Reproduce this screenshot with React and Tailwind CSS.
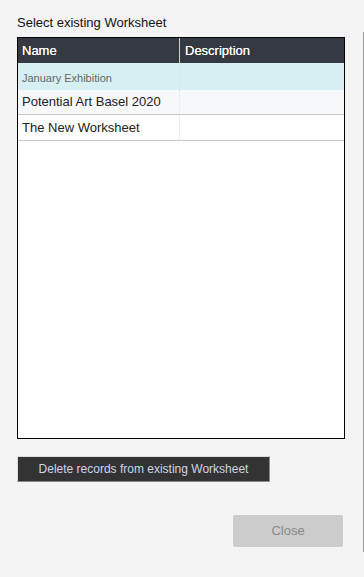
import React from 'react';

const rows = [
  { name: 'January Exhibition', selected: true },
  { name: 'Potential Art Basel 2020', alt: true },
  { name: 'The New Worksheet' },
];

const App = () => {
  return (
    <div className="relative w-[364px] h-[577px] bg-[#f4f4f4] overflow-hidden font-['Liberation_Sans',Arial,sans-serif]">
      {/* sliver of the window behind */}
      <div className="absolute right-0 top-[32px] w-px h-[520px] bg-[#9a9a9a]"></div>

      <div className="flex flex-col pl-[17px] pr-[19px] pt-[15px]">
        <p className="text-[13px] text-[#111] leading-[16px] mb-[6px]">Select existing Worksheet</p>

        <div className="h-[402px] border border-black bg-white">
          <div className="flex h-[25px] bg-[#353941] text-white text-[13px] [text-shadow:0_0_0.4px_#fff]">
            <div className="w-[162px] border-r border-[#d0d0d0] px-[4px] flex items-center">Name</div>
            <div className="flex-1 px-[5px] flex items-center">Description</div>
          </div>
          {rows.map((r) => (
            <div
              key={r.name}
              className={
                r.selected
                  ? 'flex h-[27px] bg-[#d6eff3]'
                  : r.alt
                  ? 'flex h-[25px] bg-[#f7f8fa] border-b border-[#c8c8c8]'
                  : 'flex h-[26px] bg-white border-b border-[#c8c8c8]'
              }
            >
              <div
                className={
                  r.selected
                    ? 'w-[162px] border-r border-dotted border-[#e2e2e2] px-[4px] pt-[4px] flex items-center text-[11px] text-[#666]'
                    : 'w-[162px] border-r border-dotted border-[#e2e2e2] px-[4px] flex items-center text-[13px] text-[#222]'
                }
              >
                {r.name}
              </div>
              <div className="flex-1"></div>
            </div>
          ))}
        </div>

        <button className="mt-[17px] self-start w-[253px] h-[26px] bg-[#333333] border border-t-[#dcdcdc] border-l-[#dcdcdc] border-b-[#8a8a8a] border-r-[#8a8a8a] text-[#cdd6e6] text-[12px]">
          Delete records from existing Worksheet
        </button>

        <div className="flex justify-end mt-[33px]">
          <button className="w-[110px] h-[32px] bg-[#cccccc] rounded-[2px] text-[#888] text-[13px] mr-[2px]">
            Close
          </button>
        </div>
      </div>
    </div>
  );
};

export default App;
